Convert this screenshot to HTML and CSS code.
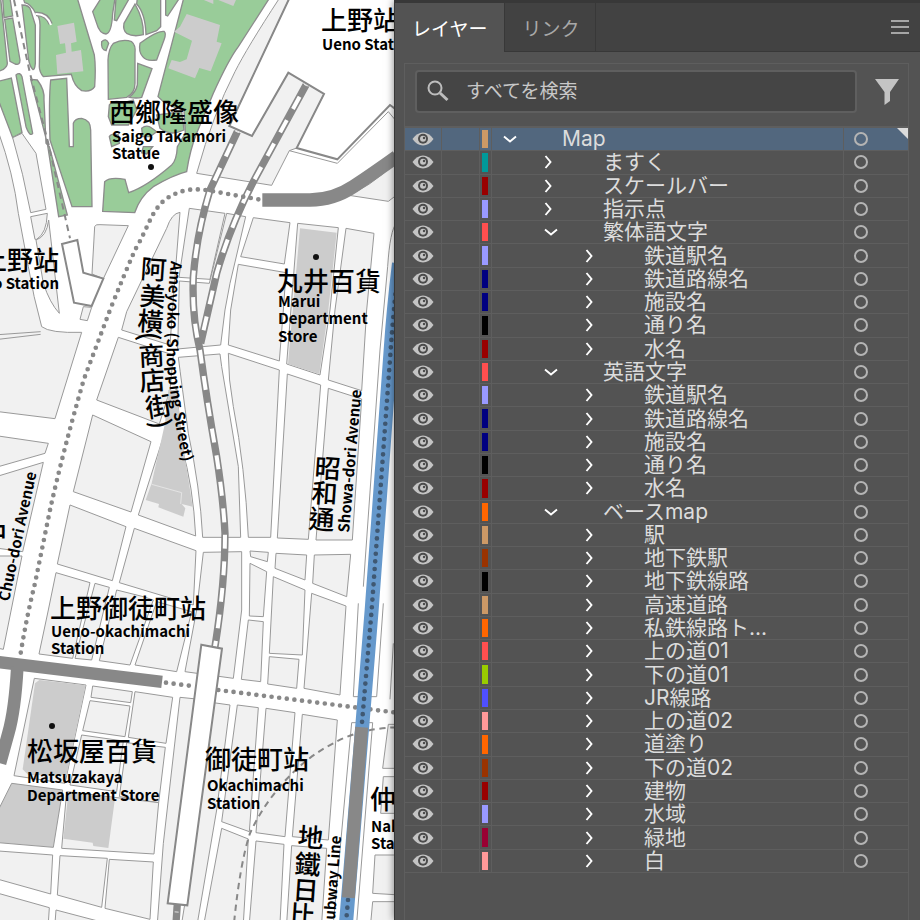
FILE: index.html
```
<!DOCTYPE html>
<html lang="ja">
<head>
    <meta charset="UTF-8">
    <meta name="viewport" content="width=device-width, initial-scale=1">
    <title>レイヤー</title>
    <link rel="stylesheet" href="styles.css">
</head>
<body>
    <!-- shared icons -->
    <svg class="icon-defs" aria-hidden="true">
        <symbol id="icon-eye" viewBox="0 0 22 16">
            <path fill="#c4c4c4" d="M0.500 8Q5 1.500 11 1.500T21.500 8Q17 14.500 11 14.500T0.500 8Z"/>
            <circle cx="11" cy="7.700" r="5" fill="#4b4b4b"/>
            <circle cx="11" cy="7.700" r="3" fill="#c4c4c4"/>
            <circle cx="12" cy="7" r="1.200" fill="#4b4b4b"/>
        </symbol>
        <symbol id="icon-right" viewBox="0 0 16 16">
            <path d="M5.500 2L10.500 8L5.500 14" fill="none" stroke="#fff" stroke-width="1.900"/>
        </symbol>
        <symbol id="icon-down" viewBox="0 0 16 16">
            <path d="M2 5.500L8 10.500L14 5.500" fill="none" stroke="#fff" stroke-width="1.900"/>
        </symbol>
    </svg>

    <div class="workspace">
        <main class="map">
            <svg class="map-art" viewBox="0 0 394 920" preserveAspectRatio="xMinYMin slice" role="img" aria-label="上野 Map">
                <!-- park and the north side, drawn at 3x -->
                <g transform="scale(.33333)">
                    <g class="green">
                        <path d="M-5-5H2L22 190Q22 200 10 208L-5 215Z"/>
                        <path d="M8-5H30L38 48L12 53Z"/>
                        <path d="M14 58L38 54L60 180Q60 197 45 192L30 184Z"/>
                        <path d="M66 15Q88 15 92 30L106 75V190Q104 212 98 208Q90 200 86 180Z"/>
                        <path d="M70-5H232L283 165Q288 200 284 260Q274 277 245 272Q222 258 214 223L130 230Q118 215 118 200L120 75Q120 50 108 42Q92 10 74 8Z"/>
                        <path d="M278 35L303-5H345L338 40Q335 100 318 102Q298 100 290 70Z"/>
                        <path d="M348-5H388L350 62L343 60Z"/>
                        <path d="M405 12Q432 60 430 104Q400 112 380 100Q368 90 372 70Z"/>
                        <path d="M412-5H482V80L470 92L438 104Q436 40 410 12Z"/>
                        <path d="M497-5H538L503 48L497 45Z"/>
                        <path d="M305 125Q318 112 326 130L318 152Q302 150 305 125Z"/>
                        <path d="M340 130Q370 115 395 125Q408 135 405 160V250Q405 280 380 292L325 298L324 180Q326 145 340 130Z"/>
                        <path d="M420 130Q470 92 492 94Q500 100 492 120L470 180Q440 185 428 170Q415 155 420 130Z"/>
                        <path d="M413 190L456 206L425 292Q410 296 388 292Q408 275 412 255Z"/>
                        <path d="M551-5H808L715 140Q685 180 640 280L590 400Q570 450 560 515Q520 525 460 560Q420 590 404 638L308 634L314 545Q330 530 375 538L386 578Q440 560 515 495Q530 480 532 440L556 400L552 330Q500 320 474 290Z"/>
                        <path d="M-5 244L34 234L66 398L38 413L-5 300Z"/>
                        <path d="M48 225Q60 215 66 230L98 400Q90 412 78 380Z"/>
                        <path d="M92 238L112 240Q135 270 132 300L138 430L148 440L202 645L176 650L142 430Z"/>
                        <path d="M152 240L200 235L208 440H220V370Q225 355 245 355Q272 360 272 390L276 620H216L150 420Q146 300 152 240Z"/>
                        <path d="M328 315Q340 298 370 308L400 300L410 330L385 375H335L325 350Z"/>
                        <path d="M328 410Q335 398 355 405L358 430L335 440Z"/>
                        <path d="M425 385Q440 372 456 385L470 395L450 410H428Z"/>
                        <path d="M430 440H458L440 462L425 458Z"/>
                        <path d="M470 345L545 335L552 390Q510 410 480 385Z"/>
                    </g>
                    <path class="path-edge" d="M108 42Q140 40 152 72"/>
                    <path class="path-fill" d="M106 42Q140 40 153 75"/>
                    <g class="building">
                        <path d="M172 78L222 68L230 125L213 130L215 155L243 150L250 214L172 222L168 165L198 158L195 130L180 132Z"/>
                        <path d="M560 42L660 75L650 125L665 130L632 214L598 204L585 235L505 205L515 180L540 186L560 178L576 122L522 95L540 80Z"/>
                        <path d="M600-5L640 12V-5Z"/>
                        <path d="M655 0L700 18L710-5Z"/>
                    </g>
                    <g class="block">
                        <path d="M38 413L66 400L108 460L138 628L92 638Q70 520 38 413Z"/>
                        <path d="M-5 395Q40 520 55 640L85 800Q100 890 125 980Q150 1000 245 997L165 1256L-5 1235Z"/>
                        <path d="M92 650L142 640Q140 700 110 718H105Z"/>
                        <path d="M146 660L178 940Q150 910 130 850L108 720Q140 710 146 660Z"/>
                        <path d="M284 680Q286 672 300 674L385 677L310 836L276 822Z"/>
                        <path d="M838-5Q740 145 705 215Q640 340 590 520L815 556L868 452L890 444L972 282L865 218L756 408L688 378L868-5Z"/>
                        <path d="M1040 585L1165 604L1190 585V485Q1100 570 1040 585Z"/>
                        <path d="M540 637Q515 640 500 685L380 935L365 990L510 1035L525 830Z"/>
                        <path d="M568 625L675 640L630 838L537 832Z"/>
                        <path d="M538 843L628 850L680 640L737 650L690 850L675 930L662 1035L533 1047Z"/>
                        <path d="M760 653L870 668L853 792L722 770Z"/>
                        <path d="M715 793L858 818L850 930L838 1083L685 1035L692 930Z"/>
                        <path d="M893 670L1015 683L990 930L960 1125L860 1092Z"/>
                        <path d="M1038 685L1122 700L1100 930L1085 1172L985 1140L1005 930Z"/>
                    </g>
                    <path class="building" d="M900 685L1010 698L985 930L958 1122L864 1092Z"/>
                    <path class="edge" d="M868 452L1012 490L1165 335L1190 365M1190 668Q1170 690 1163 800L1140 1050L1090 1760"/>
                    <path class="station-edge" d="M868-5L688 378L756 408L865 218L972 282L890 444L1012 478L1170 315L1190 330"/>
                    <path class="station" d="M186 732L232 720L250 818L310 836L275 918L222 908Z"/>
                    <path class="dashes" d="M42 0L90 220L145 430L210 715"/>
                </g>

                <!-- Ameyoko and Showa-dori -->
                <g transform="translate(0 300) scale(.33333)">
                    <path class="edge" d="M-5 104L122 95M-5 118L122 103"/>
                    <g class="block">
                        <path d="M250 20L275 22L262 62L240 58Z"/>
                        <path d="M-5 408L145 430L135 460L-5 500Z"/>
                        <path d="M-5 528L130 487L68 755L-5 745Z"/>
                        <path d="M-5 768H66L10 1048L-5 1045Z"/>
                        <path d="M355 112L520 165L510 270L478 372L290 300Z"/>
                        <path d="M500 380L415 645L587 708Q580 560 545 440L530 260Z"/>
                        <path d="M535 172L660 162L665 200Q690 350 715 500L722 712H608Q600 560 565 400Q545 250 535 172Z"/>
                        <path d="M685 160L838 210L812 712H745Q735 500 700 320Q685 240 685 160Z"/>
                        <path d="M862 222L962 255L925 718L832 714Z"/>
                        <path d="M985 265L1085 297L1057 720H948Z"/>
                        <path d="M278 345L453 425L393 636L220 575Z"/>
                        <path d="M210 615L378 680L337 842L172 792Z"/>
                        <path d="M403 685L588 752L580 915L358 848Z"/>
                        <path d="M610 757L725 755V930L700 1135L555 1115L590 930Z"/>
                        <path d="M750 753L805 757L802 785L752 770Z"/>
                        <path d="M750 790L800 815L790 950L748 948Z"/>
                        <path d="M828 760L920 765L915 840L825 805Z"/>
                        <path d="M943 765L1052 763L1040 890L938 850Z"/>
                        <path d="M820 830L915 870L907 1065L808 1060Z"/>
                        <path d="M935 880L1038 918L1020 1185L912 1165Z"/>
                        <path d="M168 818L270 848L218 1075L117 1062L145 930Z"/>
                        <path d="M285 850L328 862L275 1080L225 1075Z"/>
                        <path d="M350 870L430 890L460 900L390 1095L298 1082Z"/>
                        <path d="M470 905L575 935L530 1115L405 1095Z"/>
                    </g>
                    <g class="building">
                        <path d="M505 270L530 270L548 430L578 620L545 612L556 625L550 650L475 622L477 612L437 600L455 550L495 370Z"/>
                    </g>
                    <path d="M455 553L545 578L542 612" fill="none" stroke="#e4e4e4" stroke-width="3"/>
                </g>

                <!-- Okachimachi -->
                <g transform="translate(0 610) scale(.33333)">
                    <g class="block">
                        <path d="M745 30L790 35L782 215L724 208Z"/>
                        <path d="M808 140L897 148L890 235L803 222Z"/>
                        <path d="M103 205L258 225L195 520L42 497Z"/>
                        <path d="M278 228L397 245L392 278L273 262Z"/>
                        <path d="M270 272L390 288L375 380L248 362Z"/>
                        <path d="M405 245L518 262L498 400L385 382Z"/>
                        <path d="M245 375L370 393L350 545L210 525Z"/>
                        <path d="M380 398L496 412L476 578L358 560Z"/>
                        <path d="M540 262L600 268L525 900L520 940H472L490 700Z"/>
                        <path d="M640 278L690 285L650 600L592 940H545L600 600Z"/>
                        <path d="M712 285L775 293L748 665L665 635Z"/>
                        <path d="M798 295L885 308L855 680L768 668Z"/>
                        <path d="M907 313L1012 330L985 690L877 680Z"/>
                        <path d="M665 655L745 687L730 940H612Z"/>
                        <path d="M768 693L852 703L840 940H748Z"/>
                        <path d="M875 707L980 715L965 940H860Z"/>
                        <path d="M200 545L476 578L462 732L185 715Z"/>
                        <path d="M-5 723L158 735L152 852L-5 808Z"/>
                        <path d="M180 737L322 745L305 892L172 855Z"/>
                        <path d="M328 748L460 756L450 928L315 895Z"/>
                        <path d="M-5 850L148 893L145 940H-5Z"/>
                        <path d="M168 900L320 940H165Z"/>
                        <path d="M1165 343H1200V475H1148Z"/>
                        <path d="M1150 500H1200V610H1142Z"/>
                        <path d="M1125 735H1200V855L1118 850Z"/>
                        <path d="M1118 875H1200V940H1112Z"/>
                    </g>
                    <g class="building">
                        <path d="M118 210L257 226L200 495H85L68 478L105 220Z"/>
                        <path d="M205 548L345 565L325 714L280 708L278 698L190 686Z"/>
                        <path class="edge-line" d="M35 520L188 540L160 712L-5 698V600Z"/>
                    </g>
                    <path class="edge" d="M1075-20L1060 260H1130L1150-20M1180 100L1170 268M1118 338H1055L1000 940M1118 338L1070 940"/>
                </g>

                <!-- railways over the streets -->
                <g transform="scale(.33333)">
                    <path class="track" d="M787 600H930Q1000 600 1060 560Q1120 520 1190 470" stroke-width="40"/>
                    <path class="track" d="M-5 1986L486 2046" stroke-width="37"/>
                    <path class="track" d="M52 2000Q45 2130 25 2200L0 2290" stroke-width="38"/>
                    <path class="track" d="M712 395L630 570Q590 700 580 830Q575 950 600 1050Q620 1200 650 1370Q670 1500 675 1600Q675 1750 645 1940" stroke-width="22"/>
                    <path class="track" d="M918 255L760 545Q690 680 650 820L602 1030" stroke-width="22"/>
                    <path class="sleepers" d="M712 395L630 570Q590 700 580 830Q575 950 600 1050Q620 1200 650 1370Q670 1500 675 1600Q675 1750 645 1940"/>
                    <path class="sleepers" d="M918 255L760 545Q690 680 650 820L605 1015"/>
                    <path class="dots" d="M775 598L640 574Q600 565 560 570Q500 585 475 620C450 650 440 690 405 750Q370 830 330 930L252 1137Q190 1350 150 1530L105 1750Q80 1850 62 1960"/>
                    <path class="dots" d="M498 2048L575 2058M655 2070L1190 2138"/>
                    <path class="dashes" d="M1190 2182Q1080 2185 1000 2230C880 2290 790 2410 750 2500Q720 2590 702 2770"/>
                    <path class="subway" d="M1197 790Q1180 930 1172 1050L1115 1830L1085 2200L1038 2770"/>
                    <path class="subway-dots" d="M1197 790Q1180 930 1172 1050L1115 1830L1085 2180M1044 2700L1038 2770"/>
                    <path class="track" d="M1085 2182L1045 2693" stroke-width="39"/>
                    <path class="track" d="M532 2710L528 2770" stroke-width="22"/>
                    <path class="sleepers" d="M530 2735L528 2770"/>
                    <path class="station" d="M604 1934L666 1946L562 2716L503 2710Z"/>
                </g>

                <g class="pin">
                    <circle cx="151" cy="167" r="3"/>
                    <circle cx="316" cy="257" r="3"/>
                    <circle cx="52" cy="726" r="3"/>
                </g>

                <g class="label-zh" lang="zh-Hant">
                    <text x="321" y="30">上野站</text>
                    <text x="109" y="122">西鄉隆盛像</text>
                    <text x="-19" y="270">上野站</text>
                    <text x="277" y="291">丸井百貨</text>
                    <text x="50" y="618">上野御徒町站</text>
                    <text x="27" y="761">松坂屋百貨</text>
                    <text x="205" y="769">御徒町站</text>
                    <text x="370" y="809">仲町站</text>
                    <text x="-19" y="543">中</text>
                    <text x="140 139 137" y="278 305 330" rotate="4">阿美橫</text>
                    <text x="139 140 147" y="366 391 418" rotate="-3 -4 -9">商店街</text>
                    <text transform="translate(140 332) rotate(88)">(</text>
                    <text transform="translate(151 421) rotate(80)">)</text>
                    <text x="314 311 308" y="477 502 528" rotate="4">昭和通</text>
                    <text x="297 294 292 289" y="846 873 899 924" rotate="4">地鐵日比</text>
                </g>

                <g class="label-en" lang="en">
                    <text x="322" y="50">Ueno Station</text>
                    <text x="112" y="142">Saigo Takamori<tspan x="112" y="159">Statue</tspan></text>
                    <text x="59" y="289" text-anchor="end">Ueno Station</text>
                    <text x="278" y="307">Marui<tspan x="278" y="324">Department</tspan><tspan x="278" y="342">Store</tspan></text>
                    <text x="51" y="637">Ueno-okachimachi<tspan x="51" y="654">Station</tspan></text>
                    <text x="27" y="783">Matsuzakaya<tspan x="27" y="801">Department Store</tspan></text>
                    <text x="207" y="791">Okachimachi<tspan x="207" y="809">Station</tspan></text>
                    <text x="371" y="832">Naka-okachimachi<tspan x="371" y="849">Station</tspan></text>
                    <path id="ameyoko" fill="none" d="M171 261Q166 310 167 367Q172 410 186 480"/>
                    <text><textPath href="#ameyoko">Ameyoko (Shopping Street)</textPath></text>
                    <text transform="translate(349 533) rotate(-85)">Showa-dori Avenue</text>
                    <text transform="translate(9 602) rotate(-78)">Chuo-dori Avenue</text>
                    <text transform="translate(341 836) rotate(-86)" text-anchor="end">Subway Line</text>
                </g>
            </svg>
        </main>

        <aside class="panel">
            <div class="tabs" role="tablist">
                <button class="tab active" role="tab" aria-selected="true">レイヤー</button>
                <button class="tab" role="tab" aria-selected="false">リンク</button>
                <button class="menu" aria-label="メニュー">
                    <svg width="20" height="16" viewBox="0 0 20 16"><path d="M1 2H19M1 8H19M1 14H19" stroke="#a6a6a6" stroke-width="2"/></svg>
                </button>
            </div>
            <div class="layers">
                <div class="search-bar">
                    <label class="search">
                        <svg width="24" height="24" viewBox="0 0 24 24" fill="none" stroke="#bdbdbd"><circle cx="8" cy="8" r="6.500" stroke-width="2"/><path d="M13 13L20.500 20" stroke-width="3"/></svg>
                        <input type="text" placeholder="すべてを検索" aria-label="すべてを検索">
                    </label>
                    <button class="filter" aria-label="フィルター">
                        <svg width="24" height="28" viewBox="0 0 24 28"><path fill="#c4c4c4" d="M0 1H24L15 14V23L9.500 27V14Z"/></svg>
                    </button>
                </div>
                <ul class="layer-list" id="layer-list"></ul>
            </div>
        </aside>
    </div>
    <script src="layers.js"></script>
</body>
</html>
```

FILE: styles.css
```
* {
    box-sizing: border-box;
}

body {
    margin: 0;
    background: #fff;
    font-family: Inter, "Noto Sans CJK JP", sans-serif;
}

button {
    margin: 0;
    padding: 0;
    border: none;
    background: none;
    color: inherit;
    font: inherit;
}

.icon-defs {
    position: absolute;
    width: 0;
    height: 0;
}

.workspace {
    display: flex;
    height: 100vh;
    overflow: hidden;
}

/* map */
.map {
    flex: 1;
    min-width: 0;
}

.map-art {
    display: block;
    width: 100%;
    height: 100%;
}

.green path {
    fill: #99cc99;
    stroke: #8c8c8c;
    stroke-width: 4;
}

.block path {
    fill: #f1f1f1;
    stroke: #999;
    stroke-width: 3;
}

.building {
    fill: #ccc;
}

.edge,
.edge-line {
    stroke: #999;
    stroke-width: 3;
}

.edge {
    fill: none;
}

.path-edge,
.path-fill {
    fill: none;
    stroke: #8c8c8c;
    stroke-width: 13;
}

.path-fill {
    stroke: #fff;
    stroke-width: 6;
}

.station,
.station-edge {
    fill: #fff;
    stroke: #888;
    stroke-width: 6;
}

.station-edge {
    fill: none;
}

.track,
.sleepers,
.dots,
.dashes,
.subway,
.subway-dots {
    fill: none;
    stroke: #888;
}

.sleepers {
    stroke: #fff;
    stroke-width: 12;
    stroke-dasharray: 42 38;
    stroke-dashoffset: -40;
}

.dots,
.subway-dots {
    stroke-width: 14;
    stroke-linecap: round;
    stroke-dasharray: 0 23;
}

.dashes {
    stroke-width: 6;
    stroke-dasharray: 19 14;
}

.subway {
    stroke: #6699cc;
    stroke-width: 42;
}

.subway-dots {
    stroke: #3f5872;
}

.pin {
    fill: #111;
}

.label-zh {
    font-family: "Noto Sans CJK TC", sans-serif;
    font-size: 26px;
    font-weight: 500;
}

.label-en {
    font-family: "Noto Sans CJK TC", sans-serif;
    font-size: 15px;
    font-weight: 700;
}

/* panel */
.panel {
    display: flex;
    flex-direction: column;
    flex: 0 0 526px;
    position: relative;
    border-top: 3px solid #383838;
    border-left: 1px solid #383838;
    background: #535353;
    color: #dcdcdc;
    box-shadow: 0 0 8px rgba(0, 0, 0, 0.5);
}

.tabs {
    display: flex;
    height: 49px;
    border-bottom: 1px solid #383838;
    background: #424242;
}

.tab {
    height: 48px;
    padding: 0 16px 0 17px;
    border-right: 1px solid #383838;
    color: #a8a8a8;
    font-size: 19px;
}

.tab.active {
    height: 49px;
    padding-right: 17px;
    background: #535353;
    color: #fff;
}

.menu {
    margin-left: auto;
    padding: 0 10px;
}

.layers {
    display: flex;
    flex-direction: column;
    flex: 1;
    margin: 11px 11px 0 9px;
    border: 1px solid #5e5e5e;
    border-bottom: none;
}

.search-bar {
    display: flex;
    align-items: center;
    padding: 6px 9px 13px 10px;
    border-bottom: 2px solid #5e5e5e;
}

.search {
    display: flex;
    align-items: center;
    flex: 1;
    height: 43px;
    padding: 0 10px;
    border: 2px solid #5f5f5f;
    border-radius: 4px;
    background: #454545;
}

.search input {
    flex: 1;
    min-width: 0;
    margin-left: 15px;
    padding: 0;
    border: none;
    outline: none;
    background: none;
    color: #dcdcdc;
    font-family: inherit;
    font-size: 19px;
}

.search input::placeholder {
    color: #c8c8c8;
}

.filter {
    margin-left: 18px;
}

.filter svg,
.menu svg,
.row svg {
    display: block;
}

.layer-list {
    display: grid;
    grid-auto-rows: 1fr;
    flex: 1;
    margin: 0 0 47px;
    padding: 0;
    list-style: none;
}

.row {
    display: grid;
    grid-template-columns: 37px 38px 12px 1fr 65px;
    position: relative;
    min-height: 0;
    border-bottom: 1px solid #5e5e5e;
    font-size: 21px;
    line-height: 22px;
}

.row.selected {
    background: #52677e;
}

.row.selected::after {
    content: "";
    position: absolute;
    top: 0;
    right: 0;
    border-top: 11px solid #dcdcdc;
    border-left: 11px solid transparent;
}

.visible,
.lock,
.color {
    border-right: 1px solid #5e5e5e;
}

.visible {
    display: grid;
    place-items: center;
}

.color {
    padding: 2px 3px 2px 2px;
}

.swatch {
    display: block;
    height: 100%;
}

.name {
    display: flex;
    align-items: center;
    min-width: 0;
    white-space: nowrap;
}

.level-0 { padding-left: 10px; }
.level-1 { padding-left: 48px; }
.level-2 { padding-left: 89px; }

.name button {
    width: 16px;
    margin-right: 47px;
}

.name .opened {
    margin-right: 44px;
}

.level-1 .opened {
    margin-left: 3px;
}

.target {
    display: flex;
    align-items: center;
    padding-left: 10px;
    border-left: 1px solid #5e5e5e;
}

.target button {
    width: 14px;
    height: 14px;
    border: 2px solid #b4b4b4;
    border-radius: 50%;
}
```

FILE: layers.js
```
// [level, name, color, opened]
const layers = [
    [0, "Map", "#cc9966", true],
    [1, "ますく", "#009999"],
    [1, "スケールバー", "#990000"],
    [1, "指示点", "#9999ff"],
    [1, "繁体語文字", "#ff4f4f", true],
    [2, "鉄道駅名", "#9999ff"],
    [2, "鉄道路線名", "#000080"],
    [2, "施設名", "#000080"],
    [2, "通り名", "#000000"],
    [2, "水名", "#990000"],
    [1, "英語文字", "#ff4f4f", true],
    [2, "鉄道駅名", "#9999ff"],
    [2, "鉄道路線名", "#000080"],
    [2, "施設名", "#000080"],
    [2, "通り名", "#000000"],
    [2, "水名", "#990000"],
    [1, "ベースmap", "#ff6600", true],
    [2, "駅", "#cc9966"],
    [2, "地下鉄駅", "#993300"],
    [2, "地下鉄線路", "#000000"],
    [2, "高速道路", "#cc9966"],
    [2, "私鉄線路ト...", "#ff6600"],
    [2, "上の道01", "#ff4f4f"],
    [2, "下の道01", "#99cc00"],
    [2, "JR線路", "#4f4fff"],
    [2, "上の道02", "#ff9999"],
    [2, "道塗り", "#ff6600"],
    [2, "下の道02", "#993300"],
    [2, "建物", "#990000"],
    [2, "水域", "#9999ff"],
    [2, "緑地", "#990033"],
    [2, "白", "#ff9999"]
];

const list = document.getElementById("layer-list");
for (const [level, name, color, opened] of layers) {
    const row = document.createElement("li");
    row.className = level === 0 ? "row selected" : "row";
    row.innerHTML = `
        <button class="visible" aria-label="表示"><svg width="22" height="16"><use href="#icon-eye"/></svg></button>
        <span class="lock"></span>
        <span class="color"><span class="swatch" style="background: ${color}"></span></span>
        <div class="name level-${level}">
            <button class="${opened ? "opened" : "closed"}" aria-label="開閉"><svg width="16" height="16"><use href="#icon-${opened ? "down" : "right"}"/></svg></button>
            <span>${name}</span>
        </div>
        <div class="target"><button aria-label="ターゲット"></button></div>`;
    list.appendChild(row);
}
```
